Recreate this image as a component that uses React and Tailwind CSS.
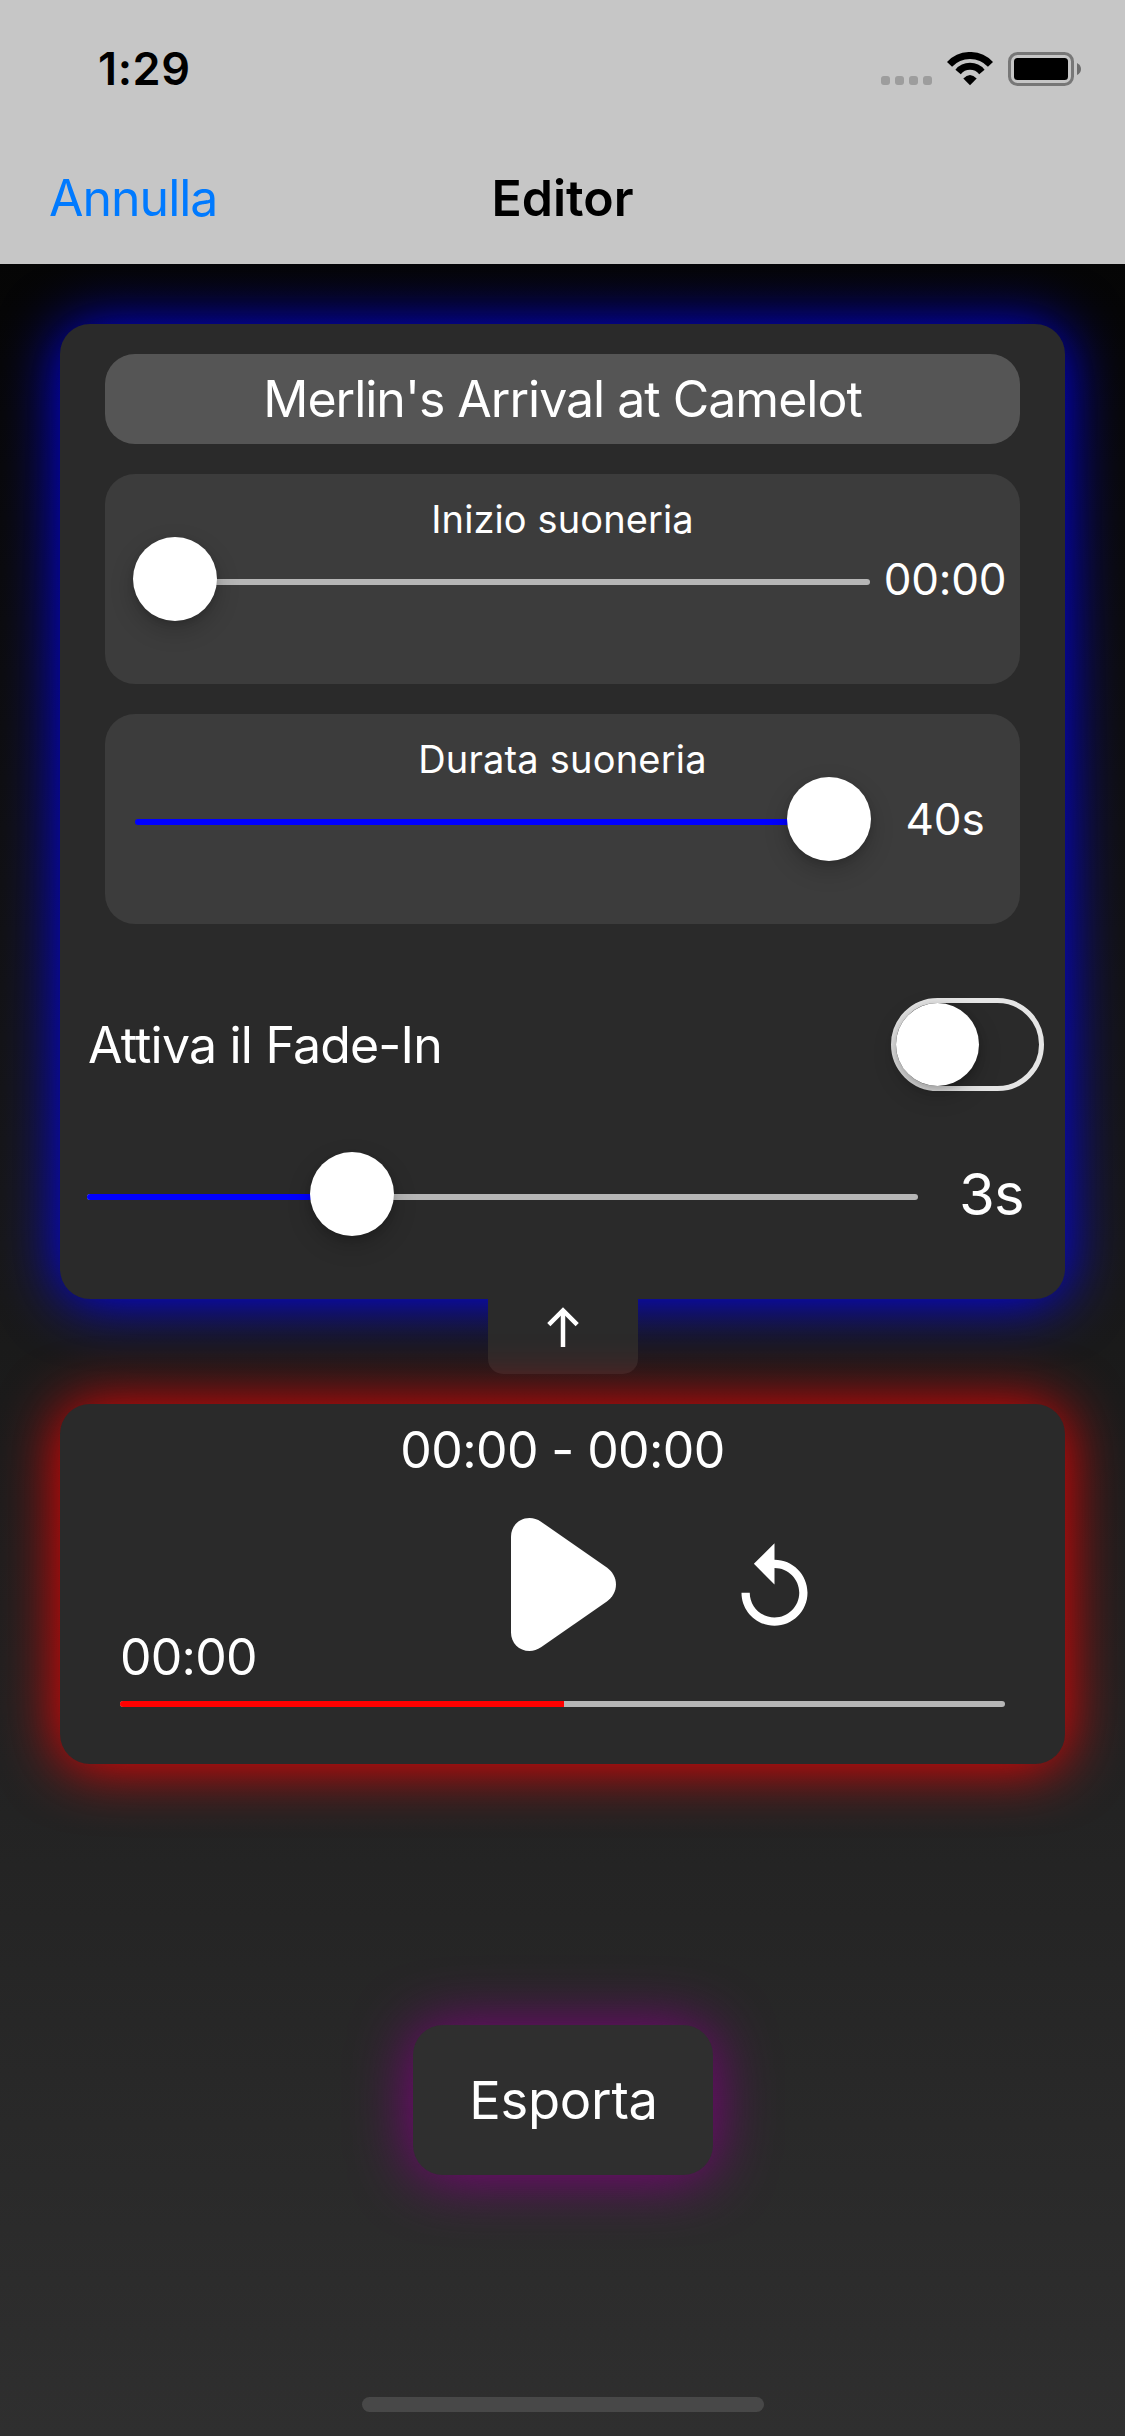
function StatusIcons() {
  return (
    <div className="flex items-center">
      <div className="mt-[23px] flex gap-[5px]">
        {[0, 1, 2, 3].map((i) => (
          <span key={i} className="size-[9px] rounded-[3px] bg-[#9d9d9d]" />
        ))}
      </div>
      <svg className="ml-[15px]" width="46" height="34" viewBox="0 0 46 34" fill="none" stroke="#000">
        <path d="M2.5 12.4A28 28 0 0 1 43.5 12.4" strokeWidth="7" />
        <path d="M11.1 19.9A15.5 15.5 0 0 1 34.9 19.9" strokeWidth="7" />
        <path d="M16.3 26.6Q23 19.6 29.7 26.6L23 33.2Z" fill="#000" stroke="none" />
      </svg>
      <svg className="ml-[15px]" width="73" height="34" viewBox="0 0 73 34">
        <rect x="1.5" y="1.5" width="63" height="31" rx="8" fill="none" stroke="#777" strokeWidth="3" />
        <rect x="6" y="6" width="54" height="22" rx="3.5" fill="#000" />
        <path d="M69 11Q73 13 73 17Q73 21 69 23Z" fill="#6d6d6d" />
      </svg>
    </div>
  );
}

function Header() {
  return (
    <header className="relative z-10 h-[264px] bg-[#c6c6c6]">
      <div className="flex h-[138px] items-center justify-between pr-[44px] pl-[98px]">
        <span className="text-[45px] font-semibold tracking-[0.6px]">1:29</span>
        <StatusIcons />
      </div>
      <div className="grid h-[120px] grid-cols-3 items-center">
        <span className="pl-[49px] text-[50px] tracking-[-1px] text-[#007aff]">Annulla</span>
        <span className="text-center text-[50px] font-semibold">Editor</span>
      </div>
    </header>
  );
}

function Knob({ className }) {
  return (
    <span
      className={`absolute top-0 size-[84px] rounded-full bg-white shadow-[0_9px_24px_rgba(0,0,0,0.2),0_3px_6px_rgba(0,0,0,0.12)] ${className}`}
    />
  );
}

function Slider({ className, fill, knob }) {
  return (
    <div className={`relative flex h-[84px] items-center ${className}`}>
      <div className="mt-[6px] h-[6px] w-full overflow-hidden rounded-full bg-[#b6b6b6]">
        <div className={`h-full bg-[#0000ff] ${fill}`} />
      </div>
      <Knob className={knob} />
    </div>
  );
}

function SliderBox({ label, labelClass, value, valueClass, fill, knob }) {
  return (
    <section className="mx-[45px] mt-[30px] h-[210px] rounded-[30px] bg-[#3c3c3c] pt-[20px]">
      <h2 className={`text-center text-[38px] leading-[50px] ${labelClass}`}>{label}</h2>
      <div className="-mt-[7px] flex h-[84px] items-center pl-[30px]">
        <Slider className="w-[735px]" fill={fill} knob={knob} />
        <span className={`w-[150px] text-center text-[44px] ${valueClass}`}>{value}</span>
      </div>
    </section>
  );
}

export default function App() {
  return (
    <div className="flex h-[2436px] w-[1125px] flex-col overflow-hidden bg-[linear-gradient(to_bottom,#000000,#2f2f2f)] font-['Inter',sans-serif] text-black">
      <Header />
      <main className="flex flex-col text-white">
        <section className="mx-[60px] mt-[60px] h-[975px] rounded-[30px] bg-[#2a2a2a] pt-[30px] shadow-[0_2px_60px_#0000ff]">
          <h1 className="mx-[45px] h-[90px] rounded-[30px] bg-[#555555] text-center text-[50px] leading-[91px] tracking-[-1px]">
            Merlin's Arrival at Camelot
          </h1>
          <SliderBox
            label="Inizio suoneria"
            labelClass="tracking-[0.1px]"
            value="00:00"
            valueClass="tracking-[-0.24px]"
            fill="w-0"
            knob="-left-[2px]"
          />
          <SliderBox
            label="Durata suoneria"
            labelClass="tracking-[0.2px]"
            value="40s"
            valueClass="tracking-[-0.09px]"
            fill="w-full"
            knob="-right-[1px]"
          />
          <div className="mt-[74px] flex h-[93px] items-center justify-between pr-[21px] pl-[28px]">
            <span className="pt-[2px] text-[50px] tracking-[-0.8px]">Attiva il Fade-In</span>
            <div className="flex h-[93px] w-[153px] items-center rounded-full border-[5px] border-[#e5e5e5]">
              <span className="size-[83px] rounded-full bg-white shadow-[0_9px_24px_rgba(0,0,0,0.2),0_3px_9px_rgba(0,0,0,0.2)]" />
            </div>
          </div>
          <div className="mt-[61px] flex h-[84px] items-center pl-[27px]">
            <Slider className="w-[831px]" fill="w-[265px]" knob="left-[223px]" />
            <span className="w-[147px] text-center text-[58px] tracking-[-0.83px]">3s</span>
          </div>
        </section>

        <div className="flex h-[75px] w-[150px] justify-center self-center rounded-b-[15px] bg-[#2a2a2a]">
          <svg className="mt-[8px] ml-px" width="32" height="40" viewBox="0 0 32 40" fill="none" stroke="#fff">
            <path d="M16 4V40" strokeWidth="4.5" />
            <path d="M1.8 17.6L16 3.4L30.2 17.6" strokeWidth="4.5" />
          </svg>
        </div>

        <section className="relative mx-[60px] mt-[30px] h-[360px] rounded-[30px] bg-[#2a2a2a] pt-[16px] shadow-[0_2px_60px_#ff0000]">
          <p className="text-center text-[50px] leading-[60px] tracking-[-0.6px]">00:00 - 00:00</p>
          <div className="mt-[38px] flex h-[133px] items-start pl-[451px]">
            <svg width="105" height="133" viewBox="0 0 105 133" fill="#fff">
              <path d="M0 18.5C0 8 8 0 18.5 0C22.5 0 26.5 1.3 30 3.7L95.5 49.3C101.5 53.5 105 59.8 105 66.5C105 73.2 101.5 79.5 95.5 83.7L30 129.3C26.5 131.7 22.5 133 18.5 133C8 133 0 125 0 114.5Z" />
            </svg>
            <svg className="mt-[21px] ml-[109px]" width="99" height="99" viewBox="0 0 24 24" fill="#fff">
              <path d="M12 5V1L7 6l5 5V7c3.31 0 6 2.69 6 6s-2.69 6-6 6-6-2.69-6-6H4c0 4.42 3.58 8 8 8s8-3.58 8-8-3.58-8-8-8z" />
            </svg>
          </div>
          <p className="-mt-[24px] pl-[60px] text-[50px] leading-[60px] tracking-[-0.76px]">00:00</p>
          <div className="mx-[60px] mt-[14px] h-[6px] overflow-hidden rounded-full bg-[#b6b6b6]">
            <div className="h-full w-[444px] bg-[#ff0000]" />
          </div>
        </section>

        <button className="mt-[261px] h-[150px] w-[300px] self-center rounded-[30px] bg-[#2f2f2f] pl-[2px] text-[52.5px] tracking-[-0.25px] shadow-[0_2px_60px_#800080]">
          Esporta
        </button>
        <div className="mt-[222px] h-[15px] w-[402px] self-center rounded-full bg-[#484848]" />
      </main>
    </div>
  );
}
